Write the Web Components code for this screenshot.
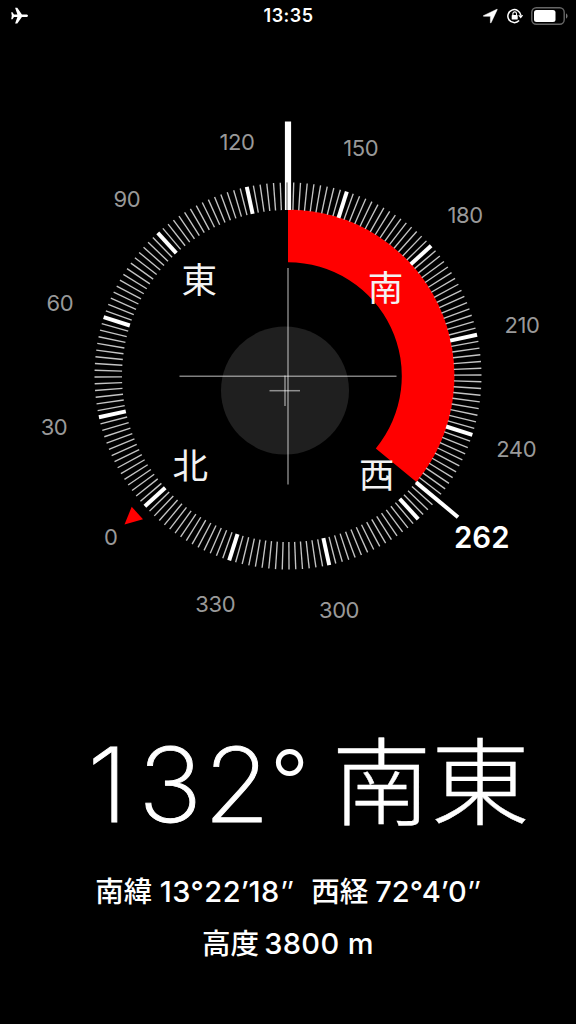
<!DOCTYPE html>
<html lang="ja">
<head>
<meta charset="utf-8">
<title>コンパス</title>
<style>
html,body{margin:0;background:#000}
body{font-family:Inter,"Noto Sans CJK JP",sans-serif;color:#fff}
</style>
</head>
<body>
<compass-app></compass-app>
<script>
class StatusBar extends HTMLElement{
  constructor(){
    super();
    this.attachShadow({mode:'open'}).innerHTML=`
    <style>
      :host{display:grid;grid-template-columns:1fr auto 1fr;align-items:center;height:32px;padding:0 8px 0 10px;box-sizing:border-box}
      time{font-size:18px;font-weight:600;letter-spacing:.45px;line-height:32px;margin-right:1px}
      .right{display:flex;justify-content:flex-end;align-items:center;gap:8px}
      svg{display:block}
    </style>
    <svg width="20" height="18" viewBox="0 0 20 18" fill="#fff"><path d="M18 8.700c0-.9-1-1.300-2-1.300h-4.100L7.300.8H5.100l2.300 6.600H4L2.500 5.200H1.200l.6 3.500-.6 3.500h1.300L4 10h3.400l-2.300 6.600h2.200L11.900 10H16c1 0 2-.4 2-1.300z"/></svg>
    <time>13:35</time>
    <div class="right">
      <svg width="16" height="16" viewBox="-.5 0 16 16"><path d="M.9 7.700 14.300 1.300Q15 1 14.700 1.700L8.600 14.700Q8.100 15.300 7.900 14.600V8.300H1.300Q.3 8.100.9 7.700z" fill="#fff" stroke="#fff" stroke-width=".5"/></svg>
      <svg width="17" height="16" viewBox="-.5 0 17 16" fill="none" stroke="#fff"><path d="M12.600 12.600A6.500 6.500 0 1 1 14.300 7.200" stroke-width="1.500"/><path d="M11.700 7.200h5l-2.500 3.300z" fill="#fff" stroke="none"/><rect x="5.200" y="7" width="6" height="4.600" rx=".7" fill="#fff" stroke="none"/><path d="M6.400 7V5.700a1.800 1.800 0 0 1 3.600 0V7" stroke-width="1.100"/></svg>
      <svg width="37" height="18" viewBox="0 0 37 18"><rect x=".8" y=".8" width="32.400" height="16.400" rx="4.500" fill="none" stroke="#666" stroke-width="1.400"/><rect x="3" y="3" width="21.500" height="12" rx="2.500" fill="#fff"/><path d="M35 6.200q1.600 1 1.600 2.800T35 11.800z" fill="#777"/></svg>
    </div>`;
  }
}
customElements.define('status-bar',StatusBar);

class CompassDial extends HTMLElement{
  constructor(){super();this.attachShadow({mode:'open'})}
  connectedCallback(){
    const heading=132.3,cx=288,cy=344;
    const at=(r,deg)=>{const a=deg*Math.PI/180;return [cx+r*Math.sin(a),cy-r*Math.cos(a)]};
    const line=(r1,r2,deg,cls)=>{const p=at(r1,deg),q=at(r2,deg);return `<line class="${cls}" x1="${p[0].toFixed(2)}" y1="${p[1].toFixed(2)}" x2="${q[0].toFixed(2)}" y2="${q[1].toFixed(2)}"/>`};
    let ticks='',labels='';
    for(let d=0;d<360;d+=2)ticks+=line(166,193.500,d-heading,d%30?'minor':'major');
    for(let d=0;d<360;d+=30){
      if(d===270)continue;
      const p=at(239.500,d-heading);
      labels+=`<text class="num" x="${p[0].toFixed(2)}" y="${(p[1]+8.200).toFixed(2)}">${d}</text>`;
    }
    [['北',0],['東',90],['南',180],['西',270]].forEach(([t,d])=>{
      const p=at(132,d-heading);
      labels+=`<text class="dir" x="${p[0].toFixed(2)}" y="${(p[1]+14.200).toFixed(2)}">${t}</text>`;
    });
    const end=129.500,a=at(166.500,0),b=at(166.500,end),c=at(113.800,end),e=at(113.800,0);
    this.shadowRoot.innerHTML=`
    <style>
      :host{display:block;height:640px}
      svg{display:block}
      .minor{stroke:#c4c4c4;stroke-width:1.350}
      .major{stroke:#fff;stroke-width:4}
      .num{font-size:22px;fill:#999;text-anchor:middle;letter-spacing:-.4px}
      .dir{font-size:35.500px;font-weight:400;font-family:"Noto Sans CJK JP",sans-serif;fill:#f3f3f3;text-anchor:middle}
      .end{font-size:29.500px;font-weight:600;fill:#fff}
      .hair{stroke:#fff;stroke-opacity:.5;stroke-width:1.500}
    </style>
    <svg width="576" height="640" viewBox="0 0 576 640">
      <circle cx="285" cy="358.500" r="64" fill="#1f1f1f"/>
      <path class="hair" d="M179.500 344.300H396.500"/><path class="hair" d="M288 236V452.500"/><path class="hair" d="M269.500 358.700H300"/><path class="hair" d="M285 343.500V374"/>
      <path fill="#f00" d="M${a} A166.500 166.500 0 0 1 ${b} L${c} A113.800 113.800 0 0 0 ${e}Z"/>
      <path d="M288 89.500V178" stroke="#fff" stroke-width="6.200"/>
      ${ticks}
      <path d="M287 150.500V178" stroke="#999" stroke-width="1.500"/>
      ${line(166.500,221,129.700,'major')}
      <path fill="#f00" d="M131.700 474.800L143 487.300 124.500 492.500Z"/>
      ${labels}
      <text class="end" x="454" y="516" textLength="55.500" lengthAdjust="spacingAndGlyphs">262</text>
    </svg>`;
  }
}
customElements.define('compass-dial',CompassDial);

class HeadingReadout extends HTMLElement{
  constructor(){
    super();
    this.attachShadow({mode:'open'}).innerHTML=`
    <style>
      :host{display:flex;align-items:baseline;height:172px;padding-left:87px;line-height:150px;padding-top:32px;box-sizing:border-box;white-space:nowrap}
      .deg{font-size:103px;font-weight:250;width:183px;transform:scaleX(1.05);transform-origin:0 0;letter-spacing:1px;-webkit-text-stroke:.9px #fff}
      .lead{letter-spacing:9.500px}
      .mark{font-size:86px;font-weight:300;width:62px;line-height:120px;transform:translateY(-10.500px)}
      .dir{font-size:99px;font-weight:300;letter-spacing:-.3px;font-family:"Noto Sans CJK JP",sans-serif;-webkit-text-stroke:.4px #fff;transform:translateY(-2.500px) scaleY(.965)}
    </style>
    <span class="deg"></span><span class="mark">°</span><span class="dir"></span>`;
  }
  connectedCallback(){
    const d=this.getAttribute('degrees'),r=this.shadowRoot;
    r.querySelector('.deg').innerHTML=`<span class="lead">${d[0]}</span>${d.slice(1)}`;
    r.querySelector('.dir').textContent=this.getAttribute('direction');
  }
}
customElements.define('heading-readout',HeadingReadout);

class PlaceReadout extends HTMLElement{
  constructor(){
    super();
    this.attachShadow({mode:'open'}).innerHTML=`
    <style>
      :host{display:flex;flex-direction:column;align-items:center;padding-top:20px;font-size:29px;font-weight:450;line-height:52px;white-space:nowrap}
      .row{display:flex;align-items:baseline;height:52px}
      .k{font-size:28.500px;font-weight:500;font-family:"Noto Sans CJK JP",sans-serif}
      .lat{width:151.500px;margin-left:7.500px;letter-spacing:.5px}.lon{margin-left:7px;letter-spacing:.1px}
      .alt{margin-left:5px;letter-spacing:.4px}
      i{font-style:normal;display:inline-block;transform:skewX(-5deg)}
      .q{transform:skewX(-5deg) scaleX(.88)}
    </style>
    <div class="row"><span class="k">南緯</span><span class="lat">13°22<i>′</i>18<i class="q">″</i></span><span class="k">西経</span><span class="lon">72°4<i>′</i>0<i class="q">″</i></span></div>
    <div class="row"><span class="k">高度</span><span class="alt">3800 m</span></div>`;
  }
}
customElements.define('place-readout',PlaceReadout);

class CompassApp extends HTMLElement{
  constructor(){
    super();
    this.attachShadow({mode:'open'}).innerHTML=`
    <style>:host{display:flex;flex-direction:column;width:576px;height:1024px;overflow:hidden;background:#000}</style>
    <status-bar></status-bar>
    <compass-dial></compass-dial>
    <heading-readout degrees="132" direction="南東"></heading-readout>
    <place-readout></place-readout>`;
  }
}
customElements.define('compass-app',CompassApp);
</script>
</body>
</html>
